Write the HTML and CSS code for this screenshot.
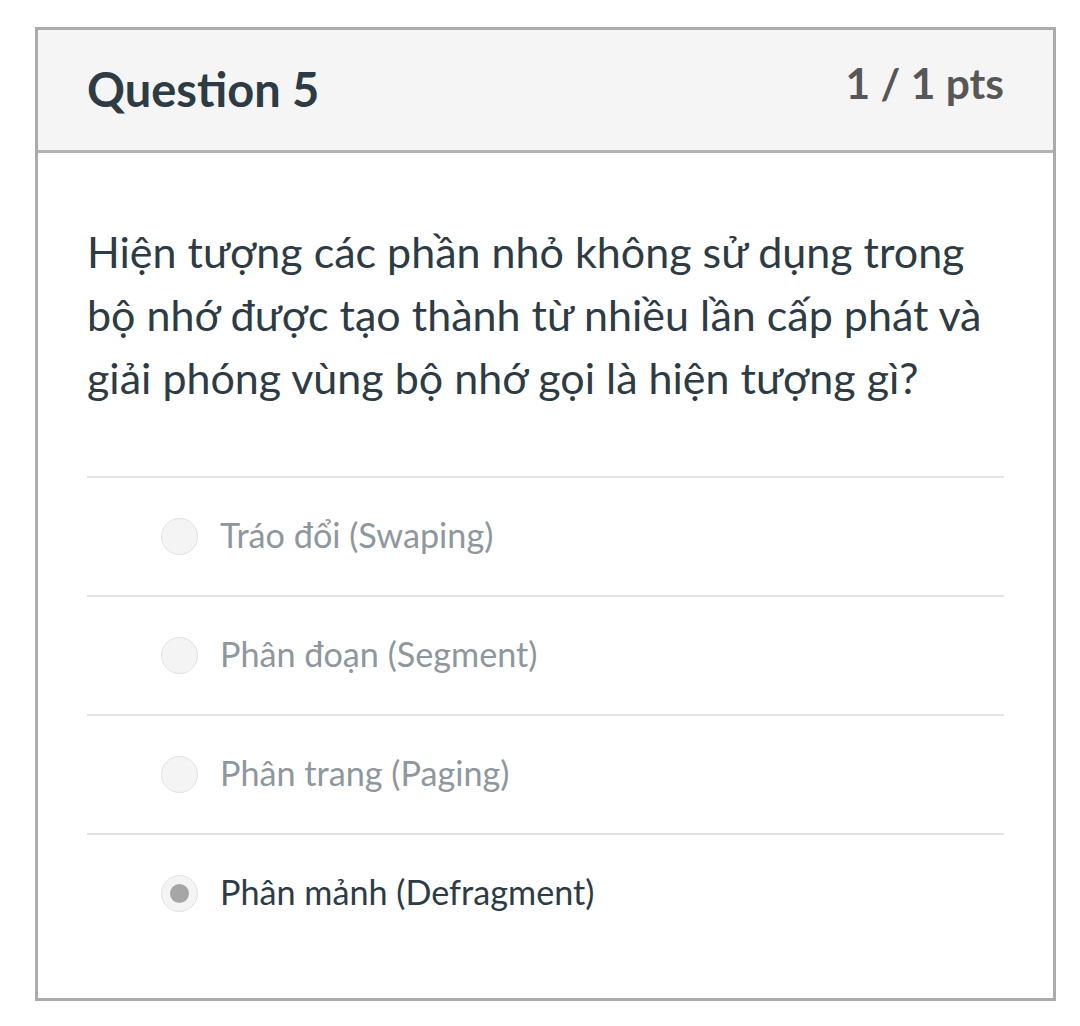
FILE: index.html
```html
<!DOCTYPE html>
<html lang="vi">
<head>
<meta charset="utf-8">
<title>Question 5</title>
<link rel="stylesheet" href="styles.css">
</head>
<body>
<div class="card">
  <div class="header">
    <div class="title">Question 5</div>
    <div class="pts">1 / 1 pts</div>
  </div>
  <div class="body">
    <div class="question">Hiện tượng các phần nhỏ không sử dụng trong bộ nhớ được tạo thành từ nhiều lần cấp phát và giải phóng vùng bộ nhớ gọi là hiện tượng gì?</div>
    <div class="answers">
      <div class="answer"><span class="radio"></span><span class="label">Tráo đổi (Swaping)</span></div>
      <div class="answer"><span class="radio"></span><span class="label">Phân đoạn (Segment)</span></div>
      <div class="answer"><span class="radio"></span><span class="label">Phân trang (Paging)</span></div>
      <div class="answer selected"><span class="radio"></span><span class="label">Phân mảnh (Defragment)</span></div>
    </div>
  </div>
</div>
</body>
</html>
```

FILE: styles.css
```css
html, body {
  margin: 0;
  padding: 0;
  background: #ffffff;
}
body {
  font-family: Lato, "Noto Sans", sans-serif;
  color: #2d3b45;
}
.card {
  box-sizing: border-box;
  width: 1021px;
  margin: 27px 0 0 35px;
  border: 3px solid #ababab;
}
.header {
  box-sizing: border-box;
  height: 123px;
  background: #f5f5f5;
  border-bottom: 3px solid #b3b3b3;
  padding: 0 49px 0 49px;
  display: flex;
  justify-content: space-between;
  align-items: flex-start;
}
.title {
  font-size: 47px;
  font-weight: 700;
  line-height: 47px;
  margin-top: 36px;
  color: #2d3b45;
}
.pts {
  font-size: 42.5px;
  font-weight: 700;
  line-height: 43px;
  margin-top: 31px;
  color: #575757;
}
.body {
  padding: 67px 49px 46px 49px;
}
.question {
  font-size: 43px;
  line-height: 63px;
  margin-bottom: 67px;
}
.answer {
  box-sizing: border-box;
  height: 119px;
  border-top: 2px solid #e3e3e3;
  display: flex;
  align-items: center;
  gap: 22px;
  padding-left: 74px;
}
.radio {
  box-sizing: border-box;
  width: 37px;
  height: 37px;
  border-radius: 50%;
  background: #f4f4f4;
  border: 1.5px solid #e2e2e2;
  display: flex;
  align-items: center;
  justify-content: center;
  flex: none;
}
.label {
  font-size: 34.2px;
  line-height: 40px;
  margin-top: -3px;
  color: #8e979e;
}
.selected .radio::after {
  content: "";
  width: 19px;
  height: 19px;
  border-radius: 50%;
  background: #a6a6a6;
}
.selected .label {
  color: #2d3b45;
}
```
